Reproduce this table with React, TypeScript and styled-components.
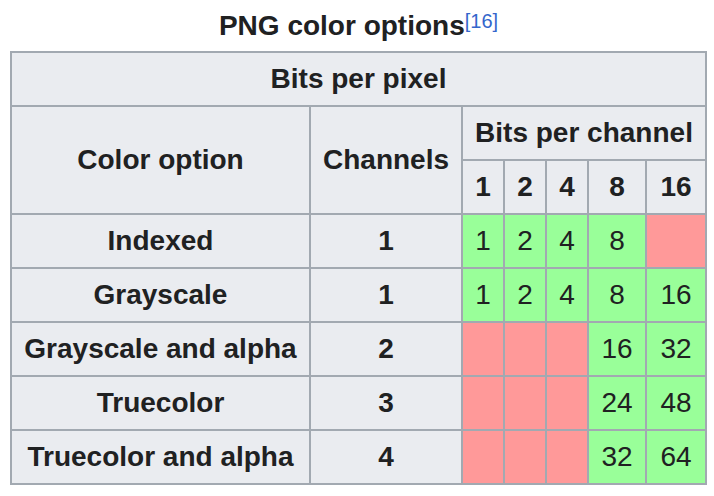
import React from "react";
import styled, { createGlobalStyle } from "styled-components";

const GlobalStyle = createGlobalStyle`
  html, body {
    margin: 0;
    padding: 0;
    background: #ffffff;
  }
  body {
    font-family: "Liberation Sans", Arial, Helvetica, sans-serif;
    color: #202122;
  }
`;

const Page = styled.div`
  padding: 4px 0 0 10px;
`;

const Table = styled.table`
  border-collapse: separate;
  border-spacing: 0;
  table-layout: fixed;
  width: 697px;
  border-top: 2px solid #a2a9b1;
  border-left: 2px solid #a2a9b1;
  font-size: 28px;
`;

const Caption = styled.caption`
  font-weight: 700;
  font-size: 28px;
  line-height: 44px;
  padding-bottom: 3px;
  text-align: center;
  color: #202122;
`;

const Ref = styled.sup`
  font-size: 20px;
  font-weight: 400;
  line-height: 1;
  vertical-align: 7px;
  color: #3366cc;
`;

const HeaderCell = styled.th`
  background: #eaecf0;
  border-right: 2px solid #a2a9b1;
  border-bottom: 2px solid #a2a9b1;
  padding: 0 11px;
  line-height: 52px;
  font-weight: 700;
  text-align: center;
  vertical-align: middle;
  white-space: nowrap;
  color: #202122;
`;

const Cell = styled.td<{ $ok: boolean }>`
  background: ${(p) => (p.$ok ? "#99ff99" : "#ff9999")};
  border-right: 2px solid #a2a9b1;
  border-bottom: 2px solid #a2a9b1;
  padding: 0 4px;
  line-height: 52px;
  font-weight: 400;
  text-align: center;
  vertical-align: middle;
  white-space: nowrap;
  color: #202122;
`;

const colWidths = [299, 152, 42, 42, 42, 58, 60];
const depths = [1, 2, 4, 8, 16];

const rows: { name: string; channels: number; values: (number | null)[] }[] = [
  { name: "Indexed", channels: 1, values: [1, 2, 4, 8, null] },
  { name: "Grayscale", channels: 1, values: [1, 2, 4, 8, 16] },
  { name: "Grayscale and alpha", channels: 2, values: [null, null, null, 16, 32] },
  { name: "Truecolor", channels: 3, values: [null, null, null, 24, 48] },
  { name: "Truecolor and alpha", channels: 4, values: [null, null, null, 32, 64] },
];

export default function App() {
  return (
    <>
      <GlobalStyle />
      <Page>
        <Table>
          <Caption>
            PNG color options<Ref>[16]</Ref>
          </Caption>
          <colgroup>
            {colWidths.map((w, i) => (
              <col key={i} style={{ width: w }} />
            ))}
          </colgroup>
          <thead>
            <tr>
              <HeaderCell colSpan={7}>Bits per pixel</HeaderCell>
            </tr>
            <tr>
              <HeaderCell rowSpan={2}>Color option</HeaderCell>
              <HeaderCell rowSpan={2}>Channels</HeaderCell>
              <HeaderCell colSpan={5}>Bits per channel</HeaderCell>
            </tr>
            <tr>
              {depths.map((d) => (
                <HeaderCell key={d}>{d}</HeaderCell>
              ))}
            </tr>
          </thead>
          <tbody>
            {rows.map((r) => (
              <tr key={r.name}>
                <HeaderCell>{r.name}</HeaderCell>
                <HeaderCell>{r.channels}</HeaderCell>
                {r.values.map((v, i) => (
                  <Cell key={i} $ok={v !== null}>
                    {v ?? ""}
                  </Cell>
                ))}
              </tr>
            ))}
          </tbody>
        </Table>
      </Page>
    </>
  );
}
